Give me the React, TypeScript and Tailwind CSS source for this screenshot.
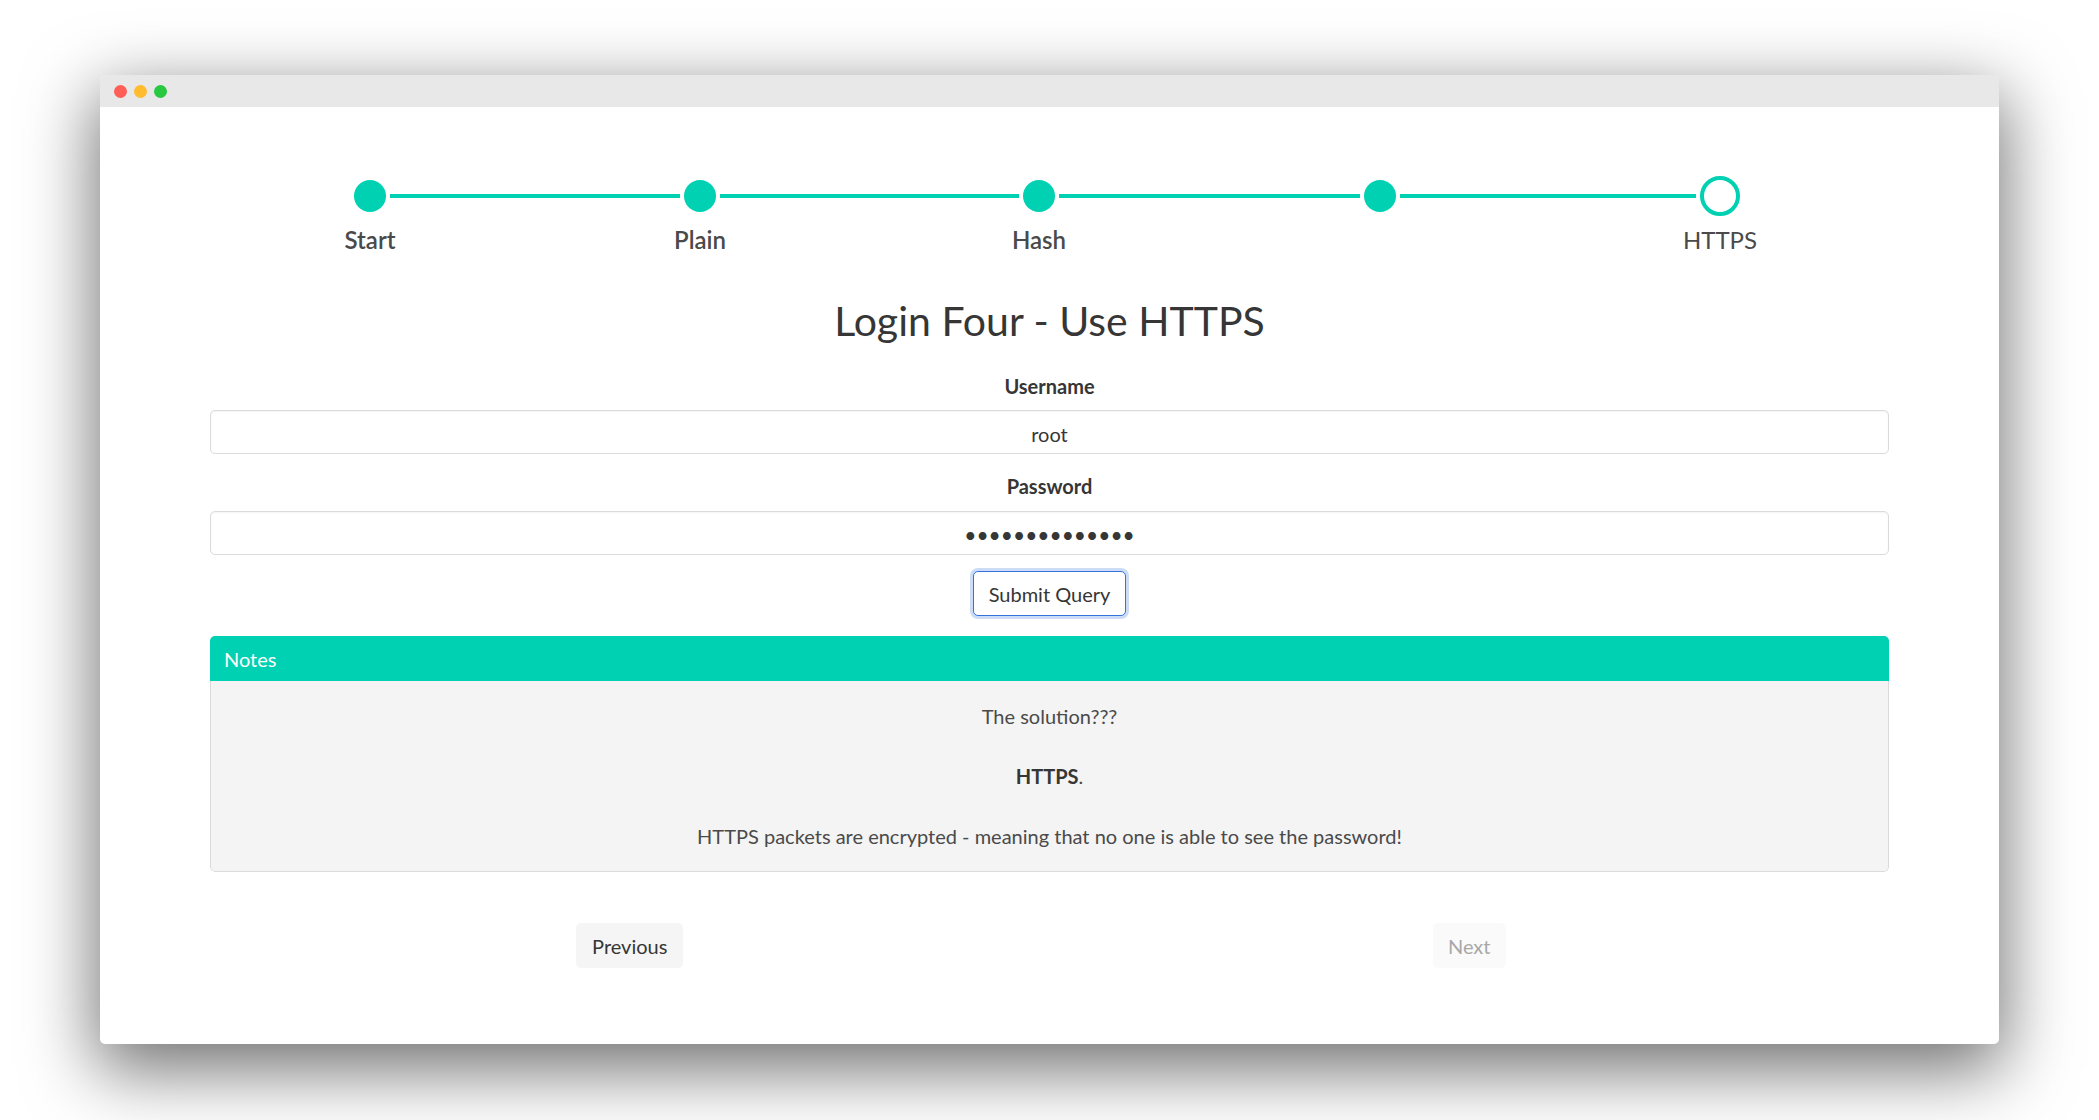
import React from 'react';

const steps = [
  { label: 'Start', done: true },
  { label: 'Plain', done: true },
  { label: 'Hash', done: true },
  { label: '', done: true },
  { label: 'HTTPS', done: false },
];

// connector widths between circles (incl. 4px gap each side)
const lineWidths = ['w-[298px]', 'w-[307px]', 'w-[309px]', 'w-[304px]'];

const Stepper: React.FC = () => (
  <div className="ml-[254px] mt-[69px] flex items-start">
    {steps.map((s, i) => (
      <React.Fragment key={i}>
        {i > 0 && (
          <div className={`flex h-[40px] shrink-0 items-center px-[4px] ${lineWidths[i - 1]}`}>
            <div className="h-[4px] w-full bg-[#00d1b2]" />
          </div>
        )}
        <div className={`flex shrink-0 flex-col items-center ${s.done ? 'w-[32px]' : 'w-[40px]'}`}>
          <div className="flex h-[40px] items-center justify-center">
            {s.done ? (
              <div className="h-[32px] w-[32px] rounded-full bg-[#00d1b2]" />
            ) : (
              <div className="h-[40px] w-[40px] rounded-full border-[4px] border-[#00d1b2] bg-white" />
            )}
          </div>
          <div
            className={`mt-[6px] h-[36px] whitespace-nowrap text-[24px] leading-[36px] text-[#4a4a4a] ${
              s.done ? 'font-semibold' : 'font-normal'
            }`}
          >
            {s.label}
          </div>
        </div>
      </React.Fragment>
    ))}
  </div>
);

export default function App() {
  return (
    <div className="h-[1120px] w-[2099px] overflow-hidden bg-white pl-[100px] pt-[75px] font-['Lato',sans-serif] text-[#4a4a4a]">
      <div className="flex h-[969px] w-[1899px] flex-col overflow-hidden rounded-[5px] bg-white shadow-[0_22px_70px_4px_rgba(0,0,0,0.56)]">
        <div className="flex h-[32px] shrink-0 items-center gap-[7px] bg-[#e8e8e8] pl-[14px]">
          <span className="h-[13px] w-[13px] rounded-full bg-[#ff5f57]" />
          <span className="h-[13px] w-[13px] rounded-full bg-[#febc2e]" />
          <span className="h-[13px] w-[13px] rounded-full bg-[#28c840]" />
        </div>

        <Stepper />

        <div className="mx-auto w-[1679px]">
          <h1 className="mt-[40px] text-center text-[41px] leading-[45px] text-[#363636]">
            Login Four - Use HTTPS
          </h1>

          <form className="flex flex-col items-center" onSubmit={(e) => e.preventDefault()}>
            <label className="mt-[28px] text-[20px] font-bold leading-[30px] text-[#363636]">Username</label>
            <input
              type="text"
              readOnly
              value="root"
              className="mt-[9px] h-[44px] w-full rounded-[5px] border border-[#dbdbdb] bg-white pt-[3px] text-center text-[20px] text-[#363636] shadow-[inset_0_1px_2px_rgba(10,10,10,0.05)] outline-none"
            />
            <label className="mt-[17px] text-[20px] font-bold leading-[30px] text-[#363636]">Password</label>
            <input
              type="password"
              readOnly
              value="supersecret123"
              className="mt-[10px] h-[44px] w-full rounded-[5px] border border-[#dbdbdb] bg-white pt-[2px] text-center text-[21px] text-[#363636] shadow-[inset_0_1px_2px_rgba(10,10,10,0.05)] outline-none"
            />
            <button
              type="submit"
              className="mt-[16px] h-[45px] rounded-[5px] border border-[#3273dc] bg-white px-[15px] text-[20px] text-[#363636] shadow-[0_0_0_3px_rgba(50,115,220,0.25)]"
            >
              Submit Query
            </button>
          </form>

          <div className="mt-[20px] overflow-hidden rounded-[5px]">
            <div className="flex h-[45px] items-center bg-[#00d1b2] px-[14px] text-[20px] text-white">Notes</div>
            <div className="flex flex-col items-center gap-[30px] rounded-b-[5px] border border-t-0 border-[#dbdbdb] bg-[#f4f4f4] pb-[20px] pt-[20px] text-[20px] leading-[30px] text-[#4a4a4a]">
              <p>The solution???</p>
              <p>
                <strong className="text-[#363636]">HTTPS</strong>.
              </p>
              <p>HTTPS packets are encrypted - meaning that no one is able to see the password!</p>
            </div>
          </div>

          <div className="mt-[51px] grid grid-cols-2">
            <div className="flex justify-center">
              <button className="h-[45px] rounded-[5px] bg-[#f5f5f5] px-[16px] text-[20px] text-[#363636]">Previous</button>
            </div>
            <div className="flex justify-center">
              <button disabled className="h-[45px] rounded-[5px] bg-[#fafafa] px-[15px] text-[20px] text-[#a8a8a8]">
                Next
              </button>
            </div>
          </div>
        </div>
      </div>
    </div>
  );
}
